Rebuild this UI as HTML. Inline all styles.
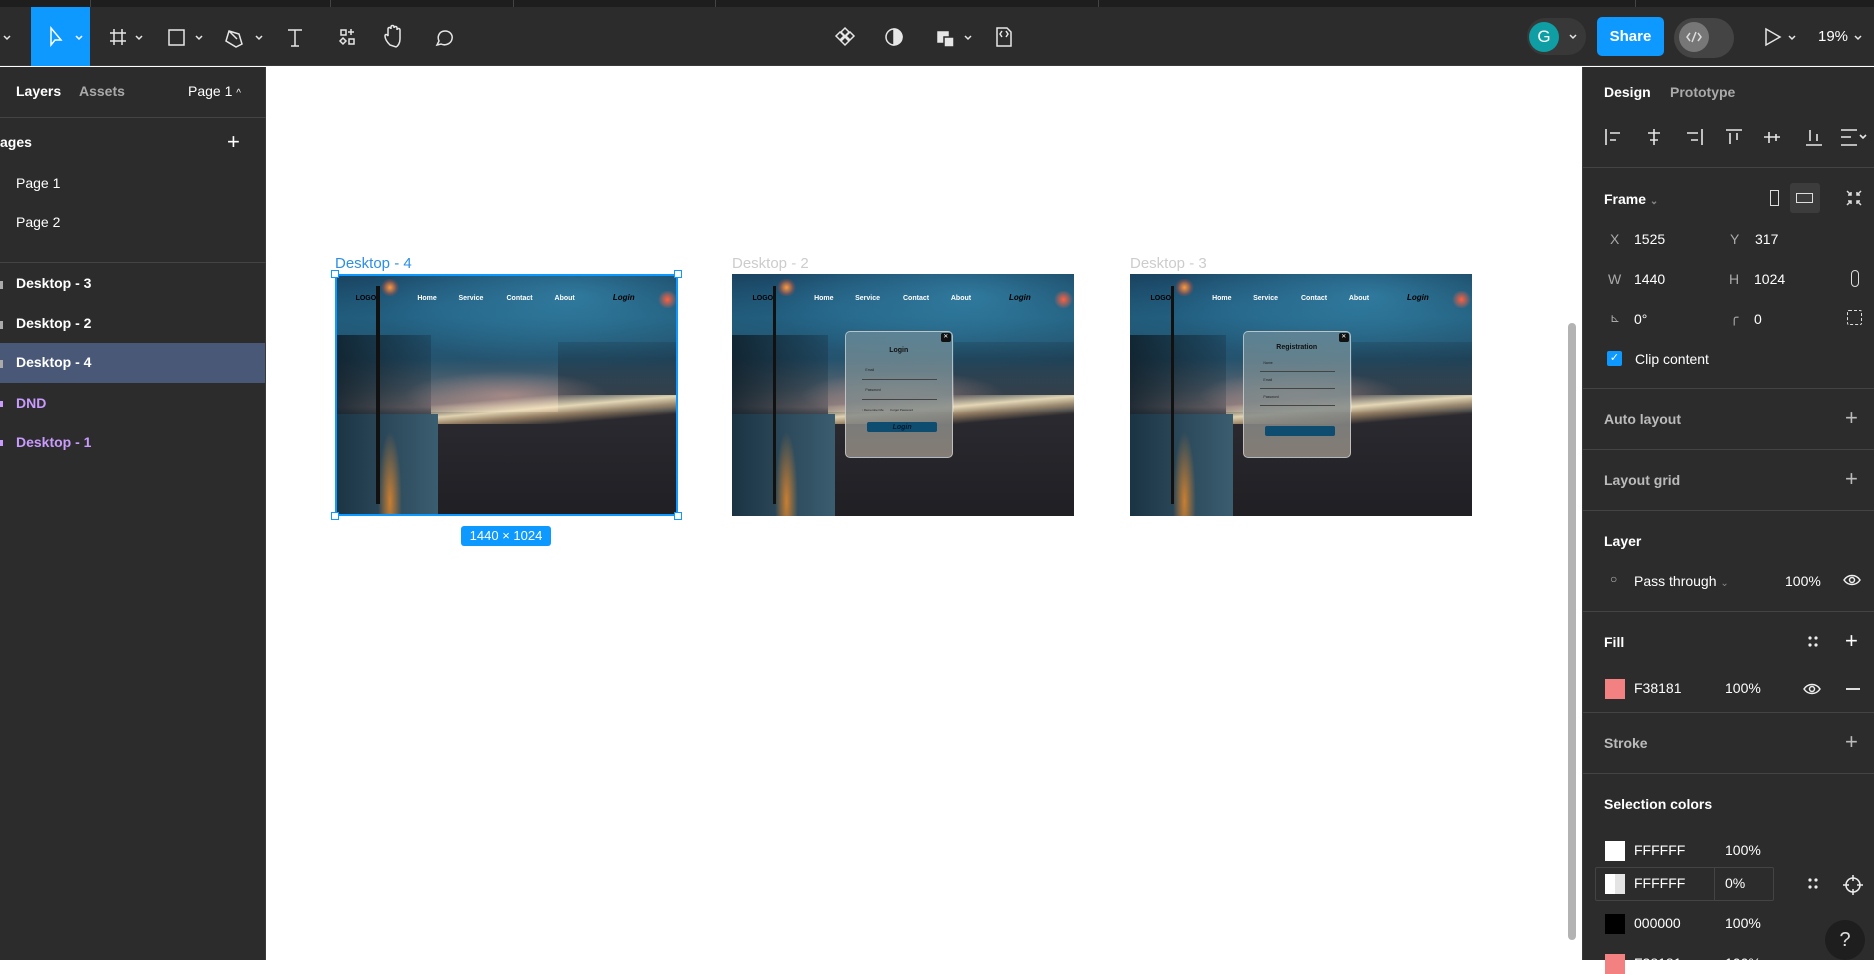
<!DOCTYPE html>
<html><head><meta charset="utf-8"><style>
*{box-sizing:border-box;margin:0;padding:0}
body{width:1874px;height:960px;overflow:hidden;background:#fff;font-family:"Liberation Sans",sans-serif;position:relative;color:#fff}
.a{position:absolute}
.top{left:0;top:0;width:1874px;height:7px;background:#1e1e1e}
.tb{left:0;top:7px;width:1874px;height:59px;background:#2c2c2c;border-bottom:1px solid #3a3a3a}
.lp{left:0;top:67px;width:266px;height:893px;background:#2c2c2c;border-right:1px solid #3a3a3a}
.rp{left:1582px;top:67px;width:292px;height:893px;background:#2c2c2c;border-left:1px solid #3a3a3a}
.t{font-size:14px;white-space:nowrap}
.b{font-weight:bold}
.sep{height:1px;background:#444}
.scene{overflow:hidden;background:linear-gradient(180deg,#173a55 0%,#1f5673 18%,#24506a 35%,#5b6670 48%,#8a7a7a 55%,#3a3a44 60%,#24252c 100%)}
.scene div{position:absolute}
.lbl{font-size:15px;color:#ccc}
</style></head><body>
<div class="a top"></div>
<div class="a" style="left:90px;top:0;width:1px;height:7px;background:#444"></div>
<div class="a" style="left:330px;top:0;width:1px;height:7px;background:#444"></div>
<div class="a" style="left:513px;top:0;width:1px;height:7px;background:#444"></div>
<div class="a" style="left:715px;top:0;width:1px;height:7px;background:#444"></div>
<div class="a" style="left:1098px;top:0;width:1px;height:7px;background:#444"></div>
<div class="a" style="left:1635px;top:0;width:1px;height:7px;background:#444"></div>
<div class="a tb"></div>
<svg class="a" style="left:0;top:7px" width="1874" height="59" fill="none" stroke="#e6e6e6" stroke-width="1.5">
<path d="M4 29l3 3 3-3"/>
<rect x="31" y="0" width="59" height="59" fill="#0d99ff" stroke="none"/>
<path d="M51 21l0 17 4-5 6 0z" stroke="#fff"/><path d="M76 29l3 3 3-3" stroke="#fff"/>
<path d="M114 22v16M122 22v16M110 26h16M110 34h16"/><path d="M136 29l3 3 3-3"/>
<rect x="169" y="23" width="15" height="15"/><path d="M196 29l3 3 3-3"/>
<path d="M229 24l10 3 3 10-6 3-10-6z M229 24l8 8"/><path d="M256 29l3 3 3-3"/>
<path d="M288 23h14M295 23v16M291 39h8"/>
<rect x="341" y="23" width="5" height="5"/><rect x="349" y="32" width="5" height="5"/><path d="M343 31l3 3-3 3-3-3zM351 22v6M348 25h6"/>
<path d="M390 38c-3-3-5-6-5-9 0-2 2-2 3 0v-7c0-2 3-2 3 0v-2c0-2 3-2 3 0v1c0-2 3-2 3 0v2c0-2 3-2 3 0v9c0 4-2 7-4 8z"/>
<path d="M437 38l2-4c-2-4 0-10 6-10 5 0 8 4 7 8-1 5-7 7-11 5z"/>
<path d="M845 21l4 4-4 4-4-4zM845 30l4 4-4 4-4-4zM840 25l4 4-4 4-4-4zM850 25l4 4-4 4-4-4z"/>
<circle cx="894" cy="30" r="8"/><path d="M894 22a8 8 0 0 1 0 16z" fill="#e6e6e6"/>
<rect x="938" y="25" width="10" height="10" fill="#e6e6e6"/><rect x="944" y="30" width="10" height="10" fill="#e6e6e6" stroke="#2c2c2c"/><path d="M965 29l3 3 3-3"/>
<path d="M997 21h10l4 4v14h-14z M1002 24l-2 3 2 3M1006 24l2 3-2 3"/>
<rect x="1527" y="11" width="59" height="37" rx="18" fill="#383838" stroke="none"/>
<circle cx="1544" cy="30" r="15" fill="#0f9ea4" stroke="none"/>
<path d="M1570 28l3 3 3-3"/>
<rect x="1597" y="10" width="67" height="39" rx="5" fill="#0d99ff" stroke="none"/>
<rect x="1674" y="11" width="60" height="40" rx="20" fill="#444" stroke="none"/>
<circle cx="1694" cy="30" r="15" fill="#777" stroke="none"/>
<path d="M1690 26l-3 4 3 4M1698 26l3 4-3 4M1696 25l-4 10" stroke="#ddd"/>
<path d="M1766 22l14 8-14 8z"/><path d="M1789 29l3 3 3-3"/><path d="M1855 29l3 3 3-3"/>
</svg>
<div class="a t" style="left:1536px;top:27px;font-size:17px;width:16px;text-align:center;line-height:20px">G</div>
<div class="a t b" style="left:1597px;top:27px;width:67px;text-align:center;font-size:15px;line-height:20px">Share</div>
<div class="a t" style="left:1818px;top:27px;font-size:15px;line-height:20px">19%</div>

<div class="a lp">
<div class="a t b" style="left:16px;top:16px">Layers</div>
<div class="a t b" style="left:79px;top:16px;color:#aaa">Assets</div>
<div class="a t" style="left:188px;top:16px">Page 1 <span style="font-size:10px">^</span></div>
<div class="a sep" style="left:0;top:50px;width:266px"></div>
<div class="a t b" style="left:0;top:67px">ages</div>
<div class="a t" style="left:227px;top:62px;font-size:22px;font-weight:300">+</div>
<div class="a t" style="left:16px;top:108px">Page 1</div>
<div class="a t" style="left:16px;top:147px">Page 2</div>
<div class="a sep" style="left:0;top:195px;width:266px"></div>
<div class="a" style="left:0;top:276px;width:265px;height:40px;background:#4a5878"></div>
<div class="a t b" style="left:16px;top:208px">Desktop - 3</div>
<div class="a t b" style="left:16px;top:248px">Desktop - 2</div>
<div class="a t b" style="left:16px;top:287px">Desktop - 4</div>
<div class="a t b" style="left:16px;top:328px;color:#c99bff">DND</div>
<div class="a t b" style="left:16px;top:367px;color:#c99bff">Desktop - 1</div>
<div class="a" style="left:0;top:214px;width:3px;height:8px;background:#aaa"></div>
<div class="a" style="left:0;top:254px;width:3px;height:8px;background:#aaa"></div>
<div class="a" style="left:0;top:293px;width:3px;height:8px;background:#aaa"></div>
<div class="a" style="left:0;top:334px;width:3px;height:6px;background:#c99bff"></div>
<div class="a" style="left:0;top:373px;width:3px;height:6px;background:#c99bff"></div>
</div>

<div class="a lbl" style="left:335px;top:255px;color:#2d8ee6">Desktop - 4</div>
<div class="a lbl" style="left:732px;top:255px;color:#ccc">Desktop - 2</div>
<div class="a lbl" style="left:1130px;top:255px;color:#ccc">Desktop - 3</div>

<div id="f1" class="a scene" style="left:335px;top:274px;width:343px;height:242px"></div>
<div id="f2" class="a scene" style="left:732px;top:274px;width:342px;height:242px"></div>
<div id="f3" class="a scene" style="left:1130px;top:274px;width:342px;height:242px"></div>
<div class="a" style="left:335px;top:274px;width:343px;height:242px;border:2px solid #0d99ff"></div>
<div class="a" style="left:331px;top:270px;width:8px;height:8px;background:#fff;border:1px solid #0d99ff"></div>
<div class="a" style="left:674px;top:270px;width:8px;height:8px;background:#fff;border:1px solid #0d99ff"></div>
<div class="a" style="left:331px;top:512px;width:8px;height:8px;background:#fff;border:1px solid #0d99ff"></div>
<div class="a" style="left:674px;top:512px;width:8px;height:8px;background:#fff;border:1px solid #0d99ff"></div>
<div class="a" style="left:461px;top:526px;width:90px;height:20px;background:#0d99ff;border-radius:3px;font-size:13px;text-align:center;line-height:20px">1440 × 1024</div>
<div class="a" style="left:1568px;top:323px;width:8px;height:617px;background:#b3b3b3;border-radius:4px"></div>

<div class="a rp">
<div class="a t b" style="left:21px;top:17px">Design</div>
<div class="a t b" style="left:87px;top:17px;color:#aaa">Prototype</div>
<svg class="a" style="left:0;top:55px" width="292" height="30" stroke="#e6e6e6" stroke-width="1.6" fill="none">
<path d="M23 7v16M27 11h10M27 18h6"/>
<path d="M71 7v16M65 11h12M67 18h8"/>
<path d="M119 7v16M104 11h11M108 18h7"/>
<path d="M143 8h16M147 11v11M154 11v7"/>
<path d="M186 10v11M193 12v7M181 15h16"/>
<path d="M223 23h16M227 8v11M234 12v7"/>
<path d="M258 8h16M258 15h10M258 23h16M277 13l3 3 3-3"/></svg>
<div class="a sep" style="left:0;top:100px;width:292px"></div>
<div class="a t b" style="left:21px;top:124px">Frame <span style="font-size:10px;color:#888">⌄</span></div>
<div class="a" style="left:207px;top:116px;width:30px;height:30px;background:#3c3c3c;border-radius:3px"></div>
<div class="a" style="left:187px;top:123px;width:9px;height:16px;border:1.5px solid #ddd"></div>
<div class="a" style="left:213px;top:126px;width:17px;height:10px;border:1.5px solid #ddd"></div>
<svg class="a" style="left:262px;top:122px" width="18" height="18" stroke="#ddd" stroke-width="1.5" fill="none"><path d="M2 2l4 4M6 3v3H3M16 2l-4 4M12 3v3h3M2 16l4-4M3 12h3v3M16 16l-4-4M15 12h-3v3"/></svg>
<div class="a t" style="left:27px;top:164px;color:#aaa">X</div><div class="a t" style="left:51px;top:164px">1525</div>
<div class="a t" style="left:147px;top:164px;color:#aaa">Y</div><div class="a t" style="left:172px;top:164px">317</div>
<div class="a t" style="left:25px;top:204px;color:#aaa">W</div><div class="a t" style="left:51px;top:204px">1440</div>
<div class="a t" style="left:146px;top:204px;color:#aaa">H</div><div class="a t" style="left:171px;top:204px">1024</div>
<div class="a" style="left:268px;top:203px;width:8px;height:17px;border:1.5px solid #ddd;border-radius:4px"></div>
<div class="a t" style="left:27px;top:244px;color:#aaa;font-size:12px">⊾</div><div class="a t" style="left:51px;top:244px">0°</div>
<div class="a t" style="left:147px;top:242px;color:#aaa">╭</div><div class="a t" style="left:171px;top:244px">0</div>
<div class="a" style="left:264px;top:243px;width:15px;height:15px;border:1.5px dashed #ddd;border-radius:2px"></div>
<div class="a" style="left:24px;top:284px;width:15px;height:15px;background:#0d99ff;border-radius:2px;font-size:11px;text-align:center;line-height:15px">✓</div>
<div class="a t" style="left:52px;top:284px">Clip content</div>
<div class="a sep" style="left:0;top:321px;width:292px"></div>
<div class="a t b" style="left:21px;top:344px;color:#bbb">Auto layout</div>
<div class="a t" style="left:262px;top:338px;font-size:22px;font-weight:300;color:#bbb">+</div>
<div class="a sep" style="left:0;top:382px;width:292px"></div>
<div class="a t b" style="left:21px;top:405px;color:#bbb">Layout grid</div>
<div class="a t" style="left:262px;top:399px;font-size:22px;font-weight:300;color:#bbb">+</div>
<div class="a sep" style="left:0;top:443px;width:292px"></div>
<div class="a t b" style="left:21px;top:466px">Layer</div>
<div class="a t" style="left:27px;top:505px;color:#bbb;font-size:12px">○</div>
<div class="a t" style="left:51px;top:506px">Pass through <span style="font-size:10px;color:#888">⌄</span></div>
<div class="a t" style="left:202px;top:506px">100%</div>
<svg class="a" style="left:260px;top:506px" width="18" height="14" stroke="#eee" stroke-width="1.5" fill="none"><path d="M1 7c4-6 12-6 16 0-4 6-12 6-16 0z"/><circle cx="9" cy="7" r="2.5"/></svg>
<div class="a sep" style="left:0;top:544px;width:292px"></div>
<div class="a t b" style="left:21px;top:567px">Fill</div>
<svg class="a" style="left:224px;top:568px" width="12" height="14" fill="#eee"><circle cx="3" cy="3" r="1.6"/><circle cx="9" cy="3" r="1.6"/><circle cx="3" cy="10" r="1.6"/><circle cx="9" cy="10" r="1.6"/></svg>
<div class="a t" style="left:262px;top:561px;font-size:22px;font-weight:300">+</div>
<div class="a" style="left:22px;top:612px;width:20px;height:20px;background:#f38181"></div>
<div class="a t" style="left:51px;top:613px">F38181</div>
<div class="a t" style="left:142px;top:613px">100%</div>
<svg class="a" style="left:220px;top:615px" width="18" height="14" stroke="#eee" stroke-width="1.5" fill="none"><path d="M1 7c4-6 12-6 16 0-4 6-12 6-16 0z"/><circle cx="9" cy="7" r="2.5"/></svg>
<div class="a" style="left:263px;top:621px;width:14px;height:1.5px;background:#ddd"></div>
<div class="a sep" style="left:0;top:645px;width:292px"></div>
<div class="a t b" style="left:21px;top:668px;color:#bbb">Stroke</div>
<div class="a t" style="left:262px;top:662px;font-size:22px;font-weight:300;color:#bbb">+</div>
<div class="a sep" style="left:0;top:706px;width:292px"></div>
<div class="a t b" style="left:21px;top:729px">Selection colors</div>
<div class="a" style="left:22px;top:774px;width:20px;height:20px;background:#fff"></div>
<div class="a t" style="left:51px;top:775px">FFFFFF</div><div class="a t" style="left:142px;top:775px">100%</div>
<div class="a" style="left:12px;top:800px;width:179px;height:34px;border:1px solid #444;border-radius:2px"></div>
<div class="a" style="left:131px;top:800px;width:1px;height:34px;background:#444"></div>
<div class="a" style="left:22px;top:807px;width:20px;height:20px;background:linear-gradient(90deg,#fff 50%,#e4e4e4 50%)"></div>
<div class="a t" style="left:51px;top:808px">FFFFFF</div><div class="a t" style="left:142px;top:808px">0%</div>
<svg class="a" style="left:224px;top:810px" width="12" height="14" fill="#eee"><circle cx="3" cy="3" r="1.6"/><circle cx="9" cy="3" r="1.6"/><circle cx="3" cy="10" r="1.6"/><circle cx="9" cy="10" r="1.6"/></svg>
<svg class="a" style="left:260px;top:808px" width="20" height="20" stroke="#eee" stroke-width="1.5" fill="none"><circle cx="10" cy="10" r="7"/><path d="M10 0v6M10 14v6M0 10h6M14 10h6"/></svg>
<div class="a" style="left:22px;top:847px;width:20px;height:20px;background:#000"></div>
<div class="a t" style="left:51px;top:848px">000000</div><div class="a t" style="left:142px;top:848px">100%</div>
<div class="a" style="left:22px;top:887px;width:20px;height:20px;background:#f38181"></div>
<div class="a t" style="left:51px;top:888px">F38181</div><div class="a t" style="left:142px;top:888px">100%</div>
<div class="a" style="left:242px;top:853px;width:40px;height:40px;border-radius:20px;background:#1e1e1e;text-align:center;line-height:40px;font-size:20px;color:#ddd">?</div>
</div>

<script>
function scene(id,modal){
var f=document.getElementById(id);
var h='';
h+='<div style="left:0;top:0;width:100%;height:45%;background:radial-gradient(ellipse at 70% 20%,rgba(60,150,190,.6),transparent 60%),radial-gradient(ellipse at 30% 30%,rgba(40,110,150,.5),transparent 60%)"></div>';
h+='<div style="left:0;top:25%;width:28%;height:40%;background:linear-gradient(90deg,rgba(15,30,40,.85),rgba(20,40,55,.3))"></div>';
h+='<div style="left:65%;top:28%;width:35%;height:32%;background:linear-gradient(180deg,rgba(20,40,55,.2),rgba(18,35,48,.8))"></div>';
h+='<div style="left:20%;top:40%;width:60%;height:20%;background:radial-gradient(ellipse,rgba(210,160,150,.55),transparent 70%)"></div>';
h+='<div style="left:28%;top:57%;width:72%;height:43%;background:linear-gradient(180deg,#2b2a30,#1f1f24)"></div>';
h+='<div style="left:28%;top:50%;width:72%;height:12%;background:linear-gradient(175deg,transparent 20%,rgba(255,240,200,.85) 45%,rgba(255,210,150,.5) 60%,transparent 80%)"></div>';
h+='<div style="left:0;top:58%;width:30%;height:42%;background:linear-gradient(90deg,#1b3444,#3b5d70)"></div>';
h+='<div style="left:12%;top:60%;width:8%;height:40%;background:radial-gradient(ellipse at 50% 85%,rgba(240,140,40,.8),transparent 60%)"></div>';
h+='<div style="left:12%;top:5%;width:1%;height:90%;background:#111"></div>';
h+='<div style="left:13%;top:2%;width:6%;height:7%;background:radial-gradient(circle,#ff9a40,rgba(255,80,40,.3) 50%,transparent 70%)"></div>';
h+='<div style="left:94%;top:7%;width:6%;height:7%;background:radial-gradient(circle,#ff6040,transparent 70%)"></div>';
var n=[['LOGO',6,'#000'],['Home',24,'#fff'],['Service',36,'#fff'],['Contact',50,'#fff'],['About',64,'#fff']];
n.forEach(function(x){h+='<div style="left:'+x[1]+'%;top:8.5%;font-size:7px;font-weight:bold;color:'+x[2]+'">'+x[0]+'</div>';});
h+='<div style="left:81%;top:8%;font-size:8px;font-weight:bold;font-style:italic;color:#000">Login</div>';
if(modal){
h+='<div style="left:33%;top:23.5%;width:31.5%;height:52.5%;border:1px solid rgba(255,255,255,.5);border-radius:5px;background:linear-gradient(180deg,rgba(100,135,150,.85),rgba(150,140,130,.85));"></div>';
h+='<div style="left:61%;top:24.5%;width:3%;height:3.5%;background:#111;color:#fff;font-size:6px;text-align:center;border-radius:2px">✕</div>';
if(modal==1){
h+='<div style="left:33%;width:31.5%;top:30%;text-align:center;font-size:7px;font-weight:bold;color:#111">Login</div>';
h+='<div style="left:38%;width:22%;top:43.5%;height:1px;background:#444"></div><div style="left:39%;top:39%;font-size:3.5px;color:#222">Email</div>';
h+='<div style="left:38%;width:22%;top:51.5%;height:1px;background:#444"></div><div style="left:39%;top:47%;font-size:3.5px;color:#222">Password</div>';
h+='<div style="left:38%;top:55.5%;font-size:3px;color:#222">▫ Remember Me &nbsp;&nbsp;&nbsp;&nbsp;&nbsp;&nbsp; Forgot Password</div>';
h+='<div style="left:39.5%;width:20.5%;top:61%;height:4.5%;background:#0e4c70;border-radius:2px;text-align:center;font-size:7px;font-weight:bold;font-style:italic;color:#031a2a;line-height:11px">Login</div>';
}else{
h+='<div style="left:33%;width:31.5%;top:29%;text-align:center;font-size:7px;font-weight:bold;color:#111">Registration</div>';
h+='<div style="left:38%;width:22%;top:40%;height:1px;background:#444"></div><div style="left:39%;top:36%;font-size:3.5px;color:#222">Name</div>';
h+='<div style="left:38%;width:22%;top:47%;height:1px;background:#444"></div><div style="left:39%;top:43%;font-size:3.5px;color:#222">Email</div>';
h+='<div style="left:38%;width:22%;top:54%;height:1px;background:#444"></div><div style="left:39%;top:50%;font-size:3.5px;color:#222">Password</div>';
h+='<div style="left:39.5%;width:20.5%;top:63%;height:4%;background:#0e4c70;border-radius:2px"></div>';
}}
f.innerHTML=h;}
scene('f1',0);scene('f2',1);scene('f3',2);
</script>
</body></html>
